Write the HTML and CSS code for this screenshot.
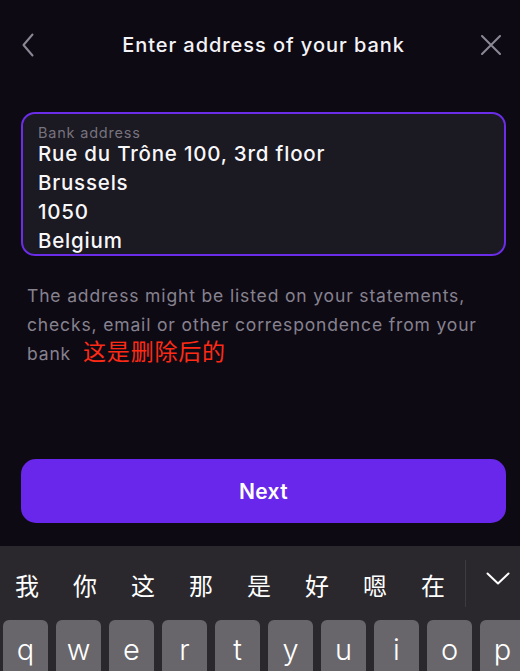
FILE: index.html
```html
<!DOCTYPE html>
<html lang="en">
<head>
<meta charset="utf-8">
<link rel="stylesheet" href="styles.css">
</head>
<body>
<div class="screen">
  <header class="topbar">
    <button class="icon-btn" aria-label="Back">
      <svg width="12" height="24" viewBox="0 0 12 24"><path d="M10.5 1.5 L1.5 12 L10.5 22.5" fill="none" stroke="#8b8896" stroke-width="2" stroke-linecap="round" stroke-linejoin="round"/></svg>
    </button>
    <h1 class="title">Enter address of your bank</h1>
    <button class="icon-btn" aria-label="Close">
      <svg width="20" height="20" viewBox="0 0 20 20"><path d="M1 1 L19 19 M19 1 L1 19" fill="none" stroke="#8b8896" stroke-width="2" stroke-linecap="round"/></svg>
    </button>
  </header>

  <main class="content">
    <div class="field">
      <div class="field-label">Bank address</div>
      <div class="field-value">
        <div>Rue du Trône 100, 3rd floor</div>
        <div>Brussels</div>
        <div>1050</div>
        <div>Belgium</div>
      </div>
    </div>
    <p class="help">The address might be listed on your statements, checks, email or other correspondence from your bank<span class="note">这是删除后的</span></p>
  </main>

  <div class="actions">
    <button class="next">Next</button>
  </div>

  <div class="keyboard">
    <div class="candidates">
      <div class="cand-list">
        <span>我</span><span>你</span><span>这</span><span>那</span><span>是</span><span>好</span><span>嗯</span><span>在</span>
      </div>
      <div class="cand-sep"></div>
      <div class="cand-toggle">
        <svg width="24" height="13" viewBox="0 0 24 13"><path d="M1.5 1.5 L12 11.5 L22.5 1.5" fill="none" stroke="#ffffff" stroke-width="2" stroke-linecap="round" stroke-linejoin="round"/></svg>
      </div>
    </div>
    <div class="keys">
      <span class="key">q</span><span class="key">w</span><span class="key">e</span><span class="key">r</span><span class="key">t</span><span class="key">y</span><span class="key">u</span><span class="key">i</span><span class="key">o</span><span class="key">p</span>
    </div>
  </div>
</div>
</body>
</html>
```

FILE: styles.css
```css
* { box-sizing: border-box; }
html, body {
  margin: 0;
  padding: 0;
  background: #0e0a14;
}
body {
  width: 520px;
  height: 671px;
  overflow: hidden;
  font-family: Inter, "Noto Sans", "Noto Sans CJK SC", sans-serif;
  color: #f3f2f6;
}
.screen {
  width: 520px;
  height: 671px;
  display: flex;
  flex-direction: column;
  overflow: hidden;
}
.topbar {
  height: 90px;
  display: flex;
  align-items: center;
  justify-content: space-between;
  padding: 0 19px 0 22px;
  padding-bottom: 1px;
}
.icon-btn {
  background: none;
  border: 0;
  padding: 0;
  display: flex;
  align-items: center;
  justify-content: center;
  width: 20px;
  height: 24px;
}
.icon-btn:first-child { justify-content: flex-start; }
.title {
  margin: 0 0 0 4px;
  font-size: 20px;
  font-weight: 500;
  letter-spacing: 0.95px;
  color: #f4f3f7;
}
.content {
  padding: 22px 14px 0 21px;
}
.field {
  height: 144px;
  border: 2px solid #6b2de8;
  border-radius: 14px;
  background: #1b1921;
  padding: 10px 15px 0 15px;
  overflow: hidden;
}
.field-label {
  font-size: 14.5px;
  line-height: 17px;
  letter-spacing: 0.8px;
  color: #77737f;
}
.field-value {
  font-size: 20.5px;
  font-weight: 500;
  line-height: 29px;
  letter-spacing: 0.8px;
  margin-top: -2px;
  color: #f8f7fa;
}
.help {
  margin: 26px 0 0 6px;
  font-size: 17.5px;
  line-height: 28.5px;
  letter-spacing: 0.85px;
  color: #86828f;
}
.note {
  margin-left: 12px;
  font-size: 23px;
  line-height: 1;
  letter-spacing: 0.8px;
  color: #ff2a16;
  font-family: "Noto Sans CJK SC", sans-serif;
}
.actions {
  margin-top: auto;
  padding: 0 14px 23px 21px;
}
.next {
  width: 100%;
  height: 64px;
  border: 0;
  border-radius: 15px;
  background: #6827ea;
  color: #ffffff;
  font-family: Inter, sans-serif;
  font-size: 21px;
  font-weight: 600;
  letter-spacing: 0.3px;
  padding: 0;
}
.keyboard {
  height: 125px;
  flex: none;
  background: #2a282d;
}
.candidates {
  height: 74px;
  display: flex;
  align-items: center;
}
.cand-list {
  flex: 1;
  display: flex;
  gap: 34px;
  padding-left: 15px;
  font-family: "Noto Sans CJK SC", sans-serif;
  font-size: 24px;
  color: #ffffff;
  padding-top: 2px;
}
.cand-sep {
  width: 1px;
  height: 47px;
  background: #3d3b41;
  margin-right: 20px;
}
.cand-toggle {
  width: 34px;
  display: flex;
  align-items: center;
  padding-bottom: 10px;
}
.keys {
  display: flex;
  gap: 8px;
  padding-left: 3px;
}
.key {
  flex: none;
  width: 45px;
  height: 56px;
  border-radius: 6px;
  background: #68666b;
  color: #ffffff;
  font-family: Inter, sans-serif;
  font-size: 29px;
  font-weight: 300;
  display: flex;
  justify-content: center;
  padding-top: 12px;
}
```
